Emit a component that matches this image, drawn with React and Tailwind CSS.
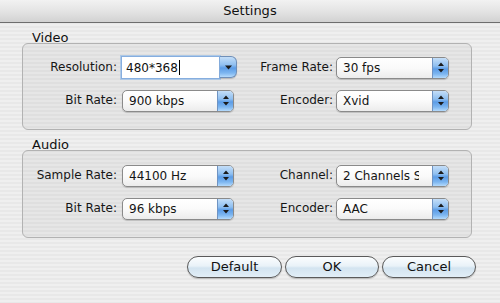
import React from "react";

function Arrows({ single }) {
  if (single) {
    return (
      <svg width="7" height="5" viewBox="0 0 7 5">
        <polygon points="0,0.5 7,0.5 3.5,4.5" fill="#1b1b1b" />
      </svg>
    );
  }
  return (
    <svg width="6" height="11" viewBox="0 0 6 11">
      <polygon points="3,0.5 6,4 0,4" fill="#1b1b1b" />
      <polygon points="0,7 6,7 3,10.5" fill="#1b1b1b" />
    </svg>
  );
}

function Popup({ value, wide, clip }) {
  return (
    <div
      className={`flex h-[22px] ${wide ? "w-[113px]" : "w-[112px]"} overflow-hidden rounded-[5px] border border-[#8a8a8a] bg-[linear-gradient(180deg,#ffffff_0%,#fafafa_50%,#ececec_100%)] shadow-[0_1px_1px_rgba(0,0,0,0.18)]`}
    >
      <div
        className={`min-w-0 flex-1 overflow-hidden whitespace-nowrap pl-[6px] text-[12px] leading-[20px] text-[#141414] ${clip ? "mr-[13px]" : ""}`}
      >
        {value}
      </div>
      <div className="flex w-[16px] items-center justify-center border-l border-[#6f93c2] bg-[linear-gradient(180deg,#c4def8_0%,#8fbff0_40%,#5c9ce6_55%,#7db6f0_80%,#b4dafc_100%)]">
        <Arrows />
      </div>
    </div>
  );
}

function Combo({ value }) {
  return (
    <div className="-ml-[1px] flex h-[23px] w-[116px] items-start">
      <div className="flex h-[23px] flex-1 items-center border border-[#86aedf] bg-white pl-[4px] text-[12px] text-[#111] shadow-[0_0_0_1px_rgba(140,185,235,0.6)]">
        {value}
        <span className="ml-[1px] h-[15px] w-px bg-black" />
      </div>
      <div className="flex h-[22px] w-[17px] items-center justify-center rounded-r-[6px] border border-l-0 border-[#6f8fb8] bg-[linear-gradient(180deg,#c4def8_0%,#8fbff0_40%,#5c9ce6_55%,#7db6f0_80%,#b4dafc_100%)] shadow-[0_1px_1px_rgba(0,0,0,0.18)]">
        <Arrows single />
      </div>
    </div>
  );
}

function Label({ children, right }) {
  return (
    <div
      className={`text-right text-[12px] leading-[23px] text-[#161616] ${right ? "pr-[3px]" : "pr-[5px]"}`}
    >
      {children}
    </div>
  );
}

function Group({ title, top, children }) {
  return (
    <div className="flex flex-col">
      <div className="relative z-10 -mb-[2px] pl-[10px] text-[13px] leading-[15px] text-[#111]">
        {title}
      </div>
      <div
        className={`grid w-[450px] grid-cols-[99px_112px_102px_113px] items-center gap-y-[10px] rounded-[6px] border border-[#b2b2b2] bg-black/[0.035] pb-[17px] ${top}`}
      >
        {children}
      </div>
    </div>
  );
}

function Btn({ children, w }) {
  return (
    <div
      className={`flex h-[22px] ${w} items-center justify-center rounded-full border border-[#5a5a5a] bg-[linear-gradient(180deg,#fbfdfe_0%,#e9f2f8_45%,#d3e4f0_55%,#e2eef7_100%)] text-[13px] leading-[20px] text-[#111] shadow-[0_1px_1px_rgba(0,0,0,0.2)]`}
    >
      {children}
    </div>
  );
}

export default function App() {
  return (
    <div className="flex h-[303px] w-[500px] flex-col overflow-hidden bg-[#ececec] bg-[image:repeating-linear-gradient(180deg,#efefef_0px,#efefef_2px,#e8e8e8_2px,#e8e8e8_4px)] font-['DejaVu_Sans',sans-serif]">
      <div className="flex h-[23px] items-center justify-center border-b border-[#6e6e6e] bg-[linear-gradient(180deg,#f2f2f2_0%,#e4e4e4_50%,#d2d2d2_100%)] text-[13px] text-[#111]">
        Settings
      </div>
      <div className="flex flex-col pl-[22px] pt-[7px]">
        <Group title="Video" top="pt-[12px]">
          <Label>Resolution:</Label>
          <Combo value="480*368" />
          <Label right>Frame Rate:</Label>
          <Popup value="30 fps" wide />
          <Label>Bit Rate:</Label>
          <Popup value="900 kbps" />
          <Label right>Encoder:</Label>
          <Popup value="Xvid" wide />
        </Group>
        <div className="mt-[7px]">
          <Group title="Audio" top="pt-[13px]">
            <Label>Sample Rate:</Label>
            <Popup value="44100 Hz" />
            <Label right>Channel:</Label>
            <Popup value="2 Channels Stereo" wide clip />
            <Label>Bit Rate:</Label>
            <Popup value="96 kbps" />
            <Label right>Encoder:</Label>
            <Popup value="AAC" wide />
          </Group>
        </div>
        <div className="mt-[18px] flex gap-[3px] pl-[165px]">
          <Btn w="w-[95px]">Default</Btn>
          <Btn w="w-[94px]">OK</Btn>
          <Btn w="w-[94px]">Cancel</Btn>
        </div>
      </div>
    </div>
  );
}
